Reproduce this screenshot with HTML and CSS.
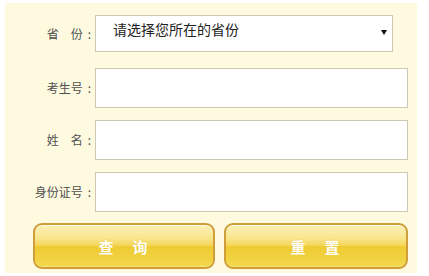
FILE: index.html
```html
<!DOCTYPE html>
<html lang="zh-CN">
<head>
  <meta charset="UTF-8" />
  <title>成绩查询</title>
  <link rel="stylesheet" href="styles.css">
</head>
<body>

  <!-- 查询表单 -->
  <div class="panel">
    <form class="query-form" onsubmit="return false;">
      <div class="form-row row-province">
        <label for="province">省　份<span class="colon">:</span></label>
        <div class="select-wrap">
          <select id="province" name="province">
            <option value="">请选择您所在的省份</option>
          </select>
        </div>
      </div>
      <div class="form-row">
        <label for="examno">考生号<span class="colon">:</span></label>
        <input type="text" id="examno" name="examno">
      </div>
      <div class="form-row">
        <label for="name">姓　名<span class="colon">:</span></label>
        <input type="text" id="name" name="name">
      </div>
      <div class="form-row">
        <label for="idcard">身份证号<span class="colon">:</span></label>
        <input type="text" id="idcard" name="idcard">
      </div>

      <div class="button-group">
        <button type="submit" class="btn btn-query">查　询</button>
        <button type="reset" class="btn btn-reset">重　置</button>
      </div>
    </form>
  </div>

</body>
</html>
```

FILE: styles.css
```css
    body {
      margin: 0;
      background: #fff;
      font-family: "Noto Sans CJK SC", "Liberation Sans", sans-serif;
      color: #555;
    }

    .panel {
      background: #fefae0;
      margin: 3px 0 0 5px;
      width: 412px;
      height: 270px;
      padding-top: 12px;
      box-sizing: border-box;
    }

    .form-row {
      display: flex;
      align-items: center;
      height: 40px;
      margin-bottom: 12px;
    }

    .row-province {
      height: 37px;
      margin-bottom: 16px;
    }

    .form-row label {
      width: 86px;
      padding-right: 4px;
      text-align: right;
      font-size: 12px;
      line-height: 16px;
      color: #4f4f4f;
    }

    .colon {
      margin-left: 5px;
    }

    .form-row input[type="text"] {
      width: 313px;
      height: 40px;
      box-sizing: border-box;
      border: 1px solid #cdc8b6;
      background: #fff;
      margin: 0;
      padding: 0 8px;
      font-size: 14px;
      outline: none;
    }

    .select-wrap {
      position: relative;
      width: 298px;
      height: 37px;
    }

    .select-wrap::after {
      content: "";
      position: absolute;
      right: 6px;
      top: 15px;
      border-left: 3px solid transparent;
      border-right: 3px solid transparent;
      border-top: 5px solid #111;
    }

    select {
      -webkit-appearance: none;
      appearance: none;
      width: 100%;
      height: 37px;
      box-sizing: border-box;
      margin: 0;
      border: 1px solid #cdc8b6;
      border-radius: 0;
      background: #fff;
      padding: 0 0 9px 17px;
      font-family: "Noto Sans CJK SC", sans-serif;
      font-size: 14px;
      color: #222;
      outline: none;
    }

    .button-group {
      display: flex;
      gap: 9px;
      padding-left: 28px;
      margin-top: -1px;
    }

    .btn {
      height: 46px;
      box-sizing: border-box;
      border: 2px solid #cf9e3a;
      border-radius: 9px;
      background: linear-gradient(#fcf0b4 0%, #f9e690 30%, #f4d75c 48%, #eecb32 52%, #f1d242 80%, #f4d84e 100%);
      box-shadow: inset 0 1px 0 #fffbe0, inset 0 -1px 0 #f8e070;
      color: #fff;
      font-family: "Noto Sans CJK SC", sans-serif;
      font-size: 15px;
      font-weight: bold;
      letter-spacing: 2px;
      text-shadow: 0 0 1px #e6c030;
      cursor: pointer;
      padding: 0;
    }

    .btn-query {
      width: 182px;
    }

    .btn-reset {
      width: 184px;
    }
```
